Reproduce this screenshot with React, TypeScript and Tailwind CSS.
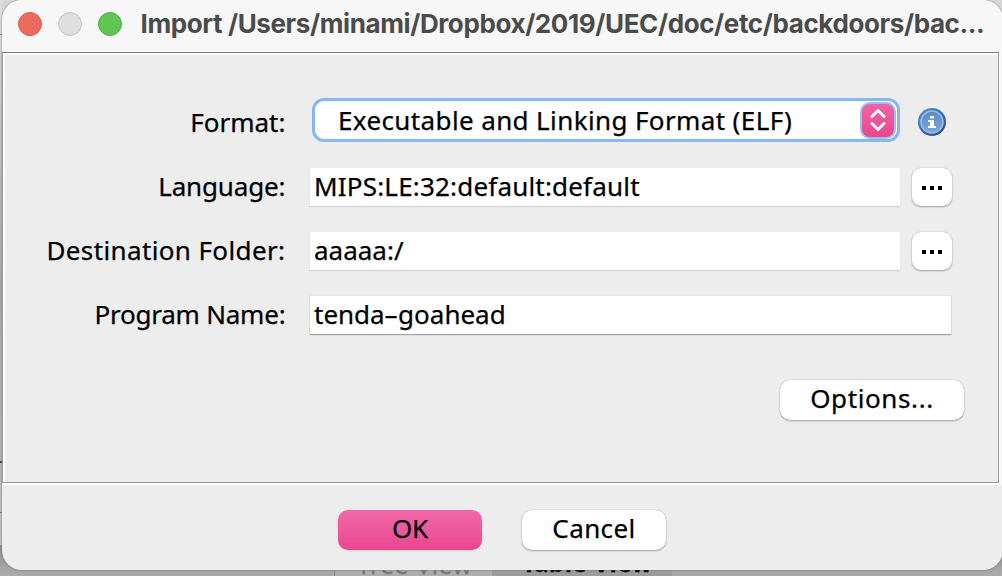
import React from "react";

const BTN =
  "flex items-center justify-center bg-white shadow-[0_0_1px_rgba(0,0,0,0.35),0_1px_2px_rgba(0,0,0,0.3)]";

const FIELD = "ml-6 h-[38px] bg-white pl-1 leading-[36px] whitespace-nowrap";

function Label({ children, className }: { children: string; className: string }) {
  return (
    <div className="flex w-[286px] shrink-0 justify-end pr-[0.6px]">
      <span className={`whitespace-nowrap ${className}`}>{children}</span>
    </div>
  );
}

function MoreButton() {
  return (
    <button className={`ml-3 h-[38px] w-10 gap-1 rounded-[9px] pt-[2px] ${BTN}`}>
      <i className="size-1 bg-black" />
      <i className="size-1 bg-black" />
      <i className="size-1 bg-black" />
    </button>
  );
}

function InfoIcon() {
  return (
    <svg className="ml-[18px] mt-[3px] size-7" viewBox="0 0 28 28">
      <defs>
        <linearGradient id="rim" x1="0" y1="0" x2="1" y2="1">
          <stop offset="0" stopColor="#4a9bd8" />
          <stop offset="1" stopColor="#2b4489" />
        </linearGradient>
        <linearGradient id="disc" x1="0" y1="0" x2="0" y2="1">
          <stop offset="0" stopColor="#5b8cc4" />
          <stop offset="1" stopColor="#7aa6d6" />
        </linearGradient>
      </defs>
      <circle cx="14" cy="14" r="14" fill="url(#rim)" />
      <circle cx="14" cy="14" r="11" fill="url(#disc)" stroke="#98bbe0" strokeWidth="1.6" />
      <path d="M12 8h4v2.5h-4zM10 12h6v6h2v2h-8v-2h2v-4h-2z" fill="#fff" />
    </svg>
  );
}

export default function App() {
  return (
    <div className="relative h-[576px] w-[1002px] overflow-hidden bg-[#a6a6a6] font-['Noto_Sans','Open_Sans',sans-serif] text-[26px] leading-[38px] text-black [-webkit-text-stroke:0.25px]">
      <div className="absolute inset-x-0 top-0 h-[40px] bg-[#d6d6d6]" />
      <div className="absolute left-0 top-0 h-[576px] w-[2px] bg-linear-to-b from-[#dedede] via-[#ababab] to-[#c4c4c4]">
        <i className="absolute left-0 top-[34px] h-px w-[2px] bg-[#888]" />
        <i className="absolute left-0 top-[461px] h-[2px] w-[2px] bg-[#444]" />
        <i className="absolute left-0 top-[512px] h-px w-[2px] bg-[#777]" />
      </div>
      <div className="absolute inset-x-0 top-[545px] flex h-[31px] bg-linear-to-b from-[#8c8c8c] to-[#ababab] pl-[334px]">
        <div className="w-[158px] border-l border-[#8a8a8a] bg-[#adadad] pl-[22px]">
          <span className="block whitespace-nowrap text-[24px] leading-[40px] tracking-[0.9px] text-[#777]">Tree View</span>
        </div>
        <div className="w-[180px] bg-[#9c9c9c] pl-[30px]">
          <span className="block whitespace-nowrap text-[24px] font-bold leading-[36px] tracking-[0.4px]">Table View</span>
        </div>
      </div>
      <div className="absolute -right-px left-[2px] top-0 h-[570px] overflow-hidden rounded-[20px] bg-[#ededed] shadow-[0_0_2px_#666]">
        <header className="flex h-[52px] items-center bg-[#f7f7f7] pb-1 pl-4">
          <div className="flex gap-4">
            <i className="size-6 rounded-full border border-[#d8594d] bg-[#ed6a5e]" />
            <i className="size-6 rounded-full border border-[#c4c4c4] bg-[#dfdfdf]" />
            <i className="size-6 rounded-full border border-[#53ad45] bg-[#61c554]" />
          </div>
          <h1 className="ml-[18.5px] whitespace-nowrap font-['Inter',sans-serif] text-[26px] font-bold tracking-[-0.385px] text-[#4b4b4b] [-webkit-text-stroke:0]">
            Import /Users/minami/Dropbox/2019/UEC/doc/etc/backdoors/bac...
          </h1>
        </header>
        <main className="mr-[2px] h-[433px] border-b-2 border-r-2 border-white">
          <div className="h-[431px] border border-[#9a9a9a] border-t-[#7d7d7d]">
            <div className="h-full border-l-2 border-t-2 border-white">
              <div className="-ml-[5px] mt-[43px] flex h-[44px] items-center">
                <Label className="pt-[4px]">Format:</Label>
                <div className="ml-[26px] flex h-[44px] w-[588px] items-center rounded-[12px] border-3 border-[#86b7ee] bg-white pl-[23px] pr-[1px]">
                  <span className="whitespace-nowrap tracking-[0.38px]">Executable and Linking Format (ELF)</span>
                  <div className="ml-auto flex h-[37px] w-[36px] items-center justify-center rounded-[10px] border-2 border-[#9dbdf3] bg-linear-to-b from-[#f063a6] to-[#e9478f]">
                    <svg width="16" height="24" viewBox="0 0 16 24" fill="none" stroke="#fff" strokeWidth="3" strokeLinecap="round" strokeLinejoin="round">
                      <path d="M2 8.5 8 2.5l6 6M2 15.5l6 6 6-6" />
                    </svg>
                  </div>
                </div>
                <InfoIcon />
              </div>
              <div className="-ml-[5px] mt-[26px] flex h-[38px] items-center">
                <Label className="pb-[2px] tracking-[-0.15px]">Language:</Label>
                <div className={`w-[590px] tracking-[0.19px] shadow-[0_1px_1px_#cfcfcf] ${FIELD}`}>MIPS:LE:32:default:default</div>
                <MoreButton />
              </div>
              <div className="-ml-[5px] mt-[26px] flex h-[38px] items-center">
                <Label className="pb-[2px] tracking-[0.38px]">Destination Folder:</Label>
                <div className={`w-[590px] shadow-[0_1px_1px_#cfcfcf] ${FIELD}`}>aaaaa:/</div>
                <MoreButton />
              </div>
              <div className="-ml-[5px] mt-[26px] flex h-[38px] items-center">
                <Label className="pb-[2px] tracking-[-0.22px]">Program Name:</Label>
                <div className={`w-[641px] shadow-[0_1px_1px_#a0a0a0,0_0_1px_#bbb] ${FIELD}`}>
                  tenda<span className="mx-[2.5px] inline-block scale-x-170">-</span>goahead
                </div>
              </div>
              <div className="mt-[46px] flex justify-end pr-[34px]">
                <button className={`h-10 w-[184px] rounded-[10px] pb-[4px] tracking-[0.6px] ${BTN}`}>Options...</button>
              </div>
            </div>
          </div>
        </main>
        <footer className="flex gap-10 pl-[336px] pt-[25px]">
          <button className="flex h-10 w-36 items-center justify-center rounded-[10px] bg-linear-to-b from-[#f068a9] to-[#e9468f] pb-[5px] tracking-[-0.3px] shadow-[0_1px_2px_rgba(0,0,0,0.12)]">OK</button>
          <button className={`h-10 w-36 rounded-[10px] pb-[5px] tracking-[0.4px] ${BTN}`}>Cancel</button>
        </footer>
      </div>
    </div>
  );
}
